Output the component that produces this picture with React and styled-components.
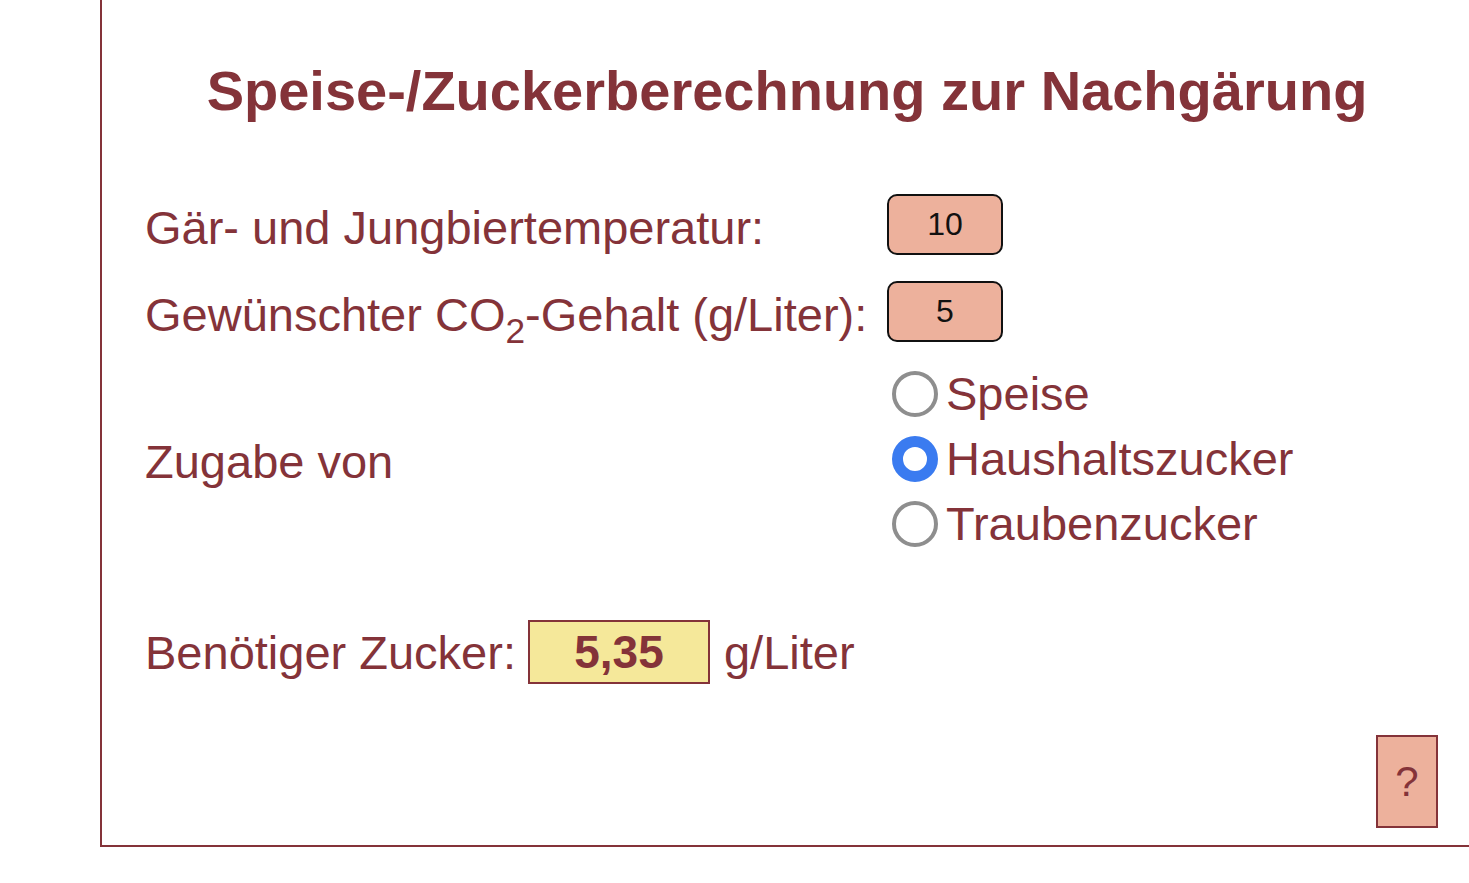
import React from "react";
import styled, { createGlobalStyle } from "styled-components";

const Global = createGlobalStyle`
  html, body { margin: 0; padding: 0; background: #fff; overflow: hidden; }
  body { font-family: "Liberation Sans", Arial, sans-serif; }
`;

const maroon = "#843339";
const salmon = "#edb19c";

const Panel = styled.div`
  box-sizing: border-box;
  margin-left: 100px;
  width: 1372px;
  height: 847px;
  border-left: 2px solid ${maroon};
  border-bottom: 2px solid ${maroon};
  padding: 58px 0 0 43px;
  color: ${maroon};
  display: flex;
  flex-direction: column;
`;

const Title = styled.h1`
  margin: 0 0 0 -43px;
  font-size: 56px;
  font-weight: bold;
  text-align: center;
  line-height: 66px;
`;

const Form = styled.div`
  margin-top: 70px;
  display: grid;
  grid-template-columns: 742px auto;
  row-gap: 26px;
  align-items: center;
`;

const Label = styled.div`
  font-size: 47px;
  line-height: 54px;
  padding-top: ${p => (p.$tall ? "0" : "6px")};
`;

const NumInput = styled.input`
  box-sizing: border-box;
  width: 116px;
  height: 61px;
  border: 2px solid #111;
  border-radius: 10px;
  background: ${salmon};
  font-family: "Liberation Sans", Arial, sans-serif;
  font-size: 32px;
  text-align: center;
  color: #111;
  outline: none;
  padding: 0;
`;

const RadioGroup = styled.div`
  display: flex;
  flex-direction: column;
  margin-top: -7px;
`;

const RadioRow = styled.label`
  display: flex;
  align-items: center;
  height: 65px;
  font-size: 47px;
  cursor: pointer;
`;

const RadioCircle = styled.span`
  box-sizing: border-box;
  width: 46px;
  height: 46px;
  border-radius: 50%;
  margin-left: 5px;
  margin-right: 8px;
  border: ${p => (p.$checked ? "11px solid #3a7bf0" : "4px solid #8e8e8e")};
  background: #fff;
  flex: none;
`;

const ResultRow = styled.div`
  margin-top: 64px;
  display: flex;
  align-items: center;
  font-size: 47px;
`;

const ResultBox = styled.div`
  box-sizing: border-box;
  width: 182px;
  height: 64px;
  margin: 0 14px 0 12px;
  border: 2px solid ${maroon};
  background: #f5e89a;
  font-weight: bold;
  font-size: 46px;
  display: flex;
  align-items: center;
  justify-content: center;
`;

const Footer = styled.div`
  margin-top: auto;
  display: flex;
  justify-content: flex-end;
  padding: 0 34px 17px 0;
`;

const HelpButton = styled.button`
  box-sizing: border-box;
  width: 62px;
  height: 93px;
  background: ${salmon};
  border: 2px solid ${maroon};
  color: ${maroon};
  font-family: "Liberation Sans", Arial, sans-serif;
  font-size: 42px;
  padding: 0;
`;

const Sub = styled.sub`
  font-size: 0.75em;
  line-height: 0;
  vertical-align: -0.35em;
`;

const options = ["Speise", "Haushaltszucker", "Traubenzucker"];

export default function App() {
  const [choice, setChoice] = React.useState(1);
  return (
    <>
      <Global />
      <Panel>
        <Title>Speise-/Zuckerberechnung zur Nachgärung</Title>
        <Form>
          <Label>Gär- und Jungbiertemperatur:</Label>
          <NumInput defaultValue="10" />
          <Label>
            Gewünschter CO<Sub>2</Sub>-Gehalt (g/Liter):
          </Label>
          <NumInput defaultValue="5" />
          <Label $tall>Zugabe von</Label>
          <RadioGroup>
            {options.map((o, i) => (
              <RadioRow key={o} onClick={() => setChoice(i)}>
                <RadioCircle $checked={choice === i} />
                {o}
              </RadioRow>
            ))}
          </RadioGroup>
        </Form>
        <ResultRow>
          Benötiger Zucker:
          <ResultBox>5,35</ResultBox>
          g/Liter
        </ResultRow>
        <Footer>
          <HelpButton>?</HelpButton>
        </Footer>
      </Panel>
    </>
  );
}
